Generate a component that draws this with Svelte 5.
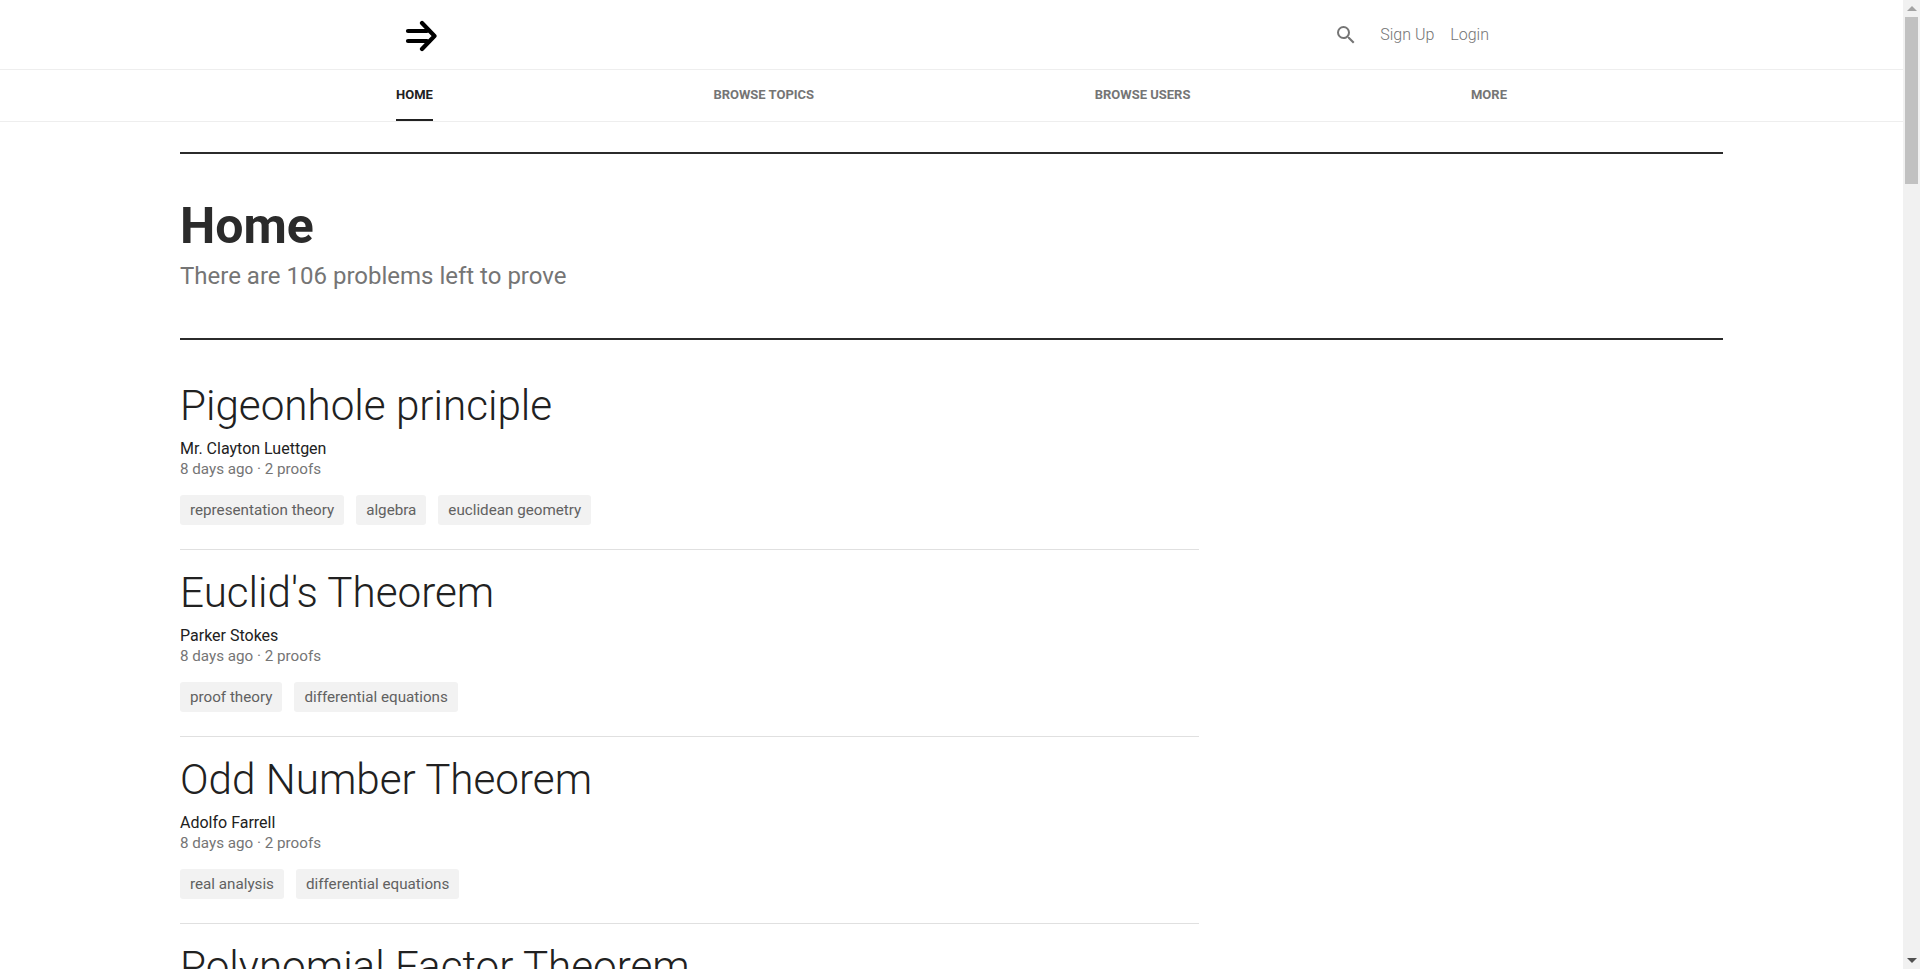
<script>
  const problems = [
    { title: "Pigeonhole principle", author: "Mr. Clayton Luettgen", tags: ["representation theory", "algebra", "euclidean geometry"] },
    { title: "Euclid's Theorem", author: "Parker Stokes", tags: ["proof theory", "differential equations"] },
    { title: "Odd Number Theorem", author: "Adolfo Farrell", tags: ["real analysis", "differential equations"] },
    { title: "Polynomial Factor Theorem", author: "Parker Stokes", tags: ["algebra"] },
  ];
  const tabs = ["Home", "Browse Topics", "Browse Users", "More"];
</script>

<header class="topbar">
  <div class="topbar-inner">
    <a class="logo" href="#home" aria-label="Home">
      <svg width="32" height="32" viewBox="0 0 32 32" fill="none" stroke="#000" stroke-width="4.2" stroke-linecap="round" stroke-linejoin="round">
        <path d="M3 11H22M3 21H22M17 3 29.5 16 17 29" />
      </svg>
    </a>
    <div class="account">
      <svg class="search" width="24" height="24" viewBox="0 0 24 24" fill="#757575">
        <path d="M15.5 14h-.79l-.28-.27A6.47 6.47 0 0 0 16 9.5 6.5 6.5 0 1 0 9.5 16c1.61 0 3.09-.59 4.23-1.57l.27.28v.79l5 4.99L20.49 19l-4.99-5zm-6 0C7.01 14 5 11.99 5 9.5S7.01 5 9.5 5 14 7.01 14 9.5 11.99 14 9.5 14z" />
      </svg>
      <a href="#signup">Sign Up</a>
      <a href="#login">Login</a>
    </div>
  </div>
</header>

<nav class="tabs">
  <div class="tabs-inner">
    {#each tabs as tab, i}
      <a class="tab" class:active={i === 0} href="#tab">{tab}</a>
    {/each}
  </div>
</nav>

<main class="page">
  <section class="hero">
    <h1>Home</h1>
    <p>There are 106 problems left to prove</p>
  </section>

  <ul class="problems">
    {#each problems as problem}
      <li class="problem">
        <h2>{problem.title}</h2>
        <div class="author">{problem.author}</div>
        <div class="meta">8 days ago · 2 proofs</div>
        <div class="tags">
          {#each problem.tags as tag}
            <span class="tag">{tag}</span>
          {/each}
        </div>
      </li>
    {/each}
  </ul>
</main>

<!-- headless browser hides the native bar, so it is drawn over the page -->
<div class="scrollbar" aria-hidden="true">
  <span class="arrow up"></span>
  <span class="thumb"></span>
  <span class="arrow down"></span>
</div>

<style>
  :global(body) {
    margin: 0;
    background: #fff;
    color: #212121;
    font-family: Roboto, "Liberation Sans", sans-serif;
  }

  a {
    text-decoration: none;
    color: inherit;
  }

  .topbar {
    border-bottom: 1px solid #eee;
  }

  .topbar-inner {
    width: 1111px;
    height: 69px;
    margin-left: 396px;
    display: flex;
    justify-content: space-between;
    align-items: center;
  }

  .logo {
    display: flex;
    margin-left: 9px;
    margin-top: 2px;
  }

  .account {
    display: flex;
    align-items: center;
    padding-right: 18px;
    color: #757575;
    font-size: 16px;
    font-weight: 300;
  }

  .search {
    margin-right: 22px;
  }

  .account a + a {
    margin-left: 16px;
  }

  .tabs {
    border-bottom: 1px solid #eee;
  }

  .tabs-inner {
    width: 1111px;
    height: 51px;
    margin-left: 396px;
    display: flex;
    justify-content: space-between;
  }

  .tab {
    display: flex;
    align-items: center;
    height: 51px;
    box-sizing: border-box;
    padding-bottom: 2px;
    font-size: 13px;
    font-weight: 700;
    text-transform: uppercase;
    color: #757575;
  }

  .tab.active {
    color: #212121;
    padding-bottom: 0;
    border-bottom: 2px solid #212121;
  }

  .page {
    margin: 30px 180px 0;
    width: 1543px;
  }

  .hero {
    border-top: 2px solid #2b2b2b;
    border-bottom: 2px solid #2b2b2b;
    height: 188px;
    padding-top: 43px;
    box-sizing: border-box;
  }

  h1 {
    margin: 0;
    font-size: 50px;
    font-weight: 700;
    line-height: 58px;
    color: #2b2b2b;
  }

  .hero p {
    margin: 5px 0 0;
    font-size: 24px;
    font-weight: 400;
    line-height: 32px;
    color: #757575;
  }

  .problems {
    list-style: none;
    margin: 23px 0 0;
    padding: 0;
    width: 1019px;
  }

  .problem {
    padding: 15px 0 24px;
    border-bottom: 1px solid #e0e0e0;
  }

  h2 {
    margin: 0;
    font-size: 42.2px;
    font-weight: 300;
    line-height: 56px;
  }

  .author {
    margin-top: 5px;
    font-size: 16px;
    line-height: 20px;
  }

  .meta {
    font-size: 15.2px;
    line-height: 20px;
    color: #757575;
  }

  .tags {
    display: flex;
    gap: 12px;
    margin-top: 16px;
  }

  .tag {
    padding: 0 10px;
    height: 30px;
    line-height: 30px;
    border-radius: 3px;
    background: #f2f2f2;
    color: #616161;
    font-size: 15.2px;
  }

  .scrollbar {
    position: fixed;
    top: 0;
    right: 0;
    bottom: 0;
    width: 17px;
    background: #f1f1f1;
    display: flex;
    flex-direction: column;
    align-items: center;
  }

  .arrow {
    width: 0;
    height: 0;
    border-left: 5px solid transparent;
    border-right: 5px solid transparent;
  }

  .arrow.up {
    margin-top: 6px;
    border-bottom: 5px solid #a3a3a3;
  }

  .arrow.down {
    margin: auto 0 6px;
    border-top: 5px solid #505050;
  }

  .thumb {
    width: 13px;
    height: 167px;
    margin-top: 6px;
    background: #c1c1c1;
  }
</style>
